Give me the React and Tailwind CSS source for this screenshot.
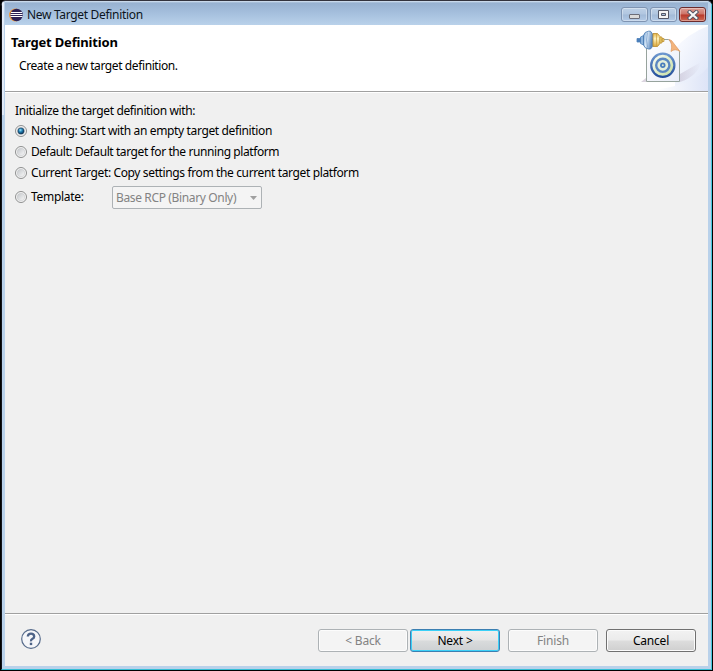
import { useState } from 'react';

const OPTIONS = [
  { id: 'nothing', label: 'Nothing: Start with an empty target definition', style: 'tracking-[-0.36px]' },
  { id: 'default', label: 'Default: Default target for the running platform', style: 'tracking-[-0.41px]' },
  { id: 'current', label: 'Current Target: Copy settings from the current target platform', style: 'tracking-[-0.37px]' },
];

function EclipseIcon() {
  return (
    <svg width="14" height="14" viewBox="0 0 14 14" className="shrink-0 mt-px">
      <circle cx="6.4" cy="7" r="6.4" fill="#f09a3e" />
      <circle cx="7.6" cy="7" r="6.2" fill="#2c2255" />
      <path d="M2 4.500h11M1.500 6.500h12M1.500 8.500h12" stroke="#fff" strokeWidth="1" />
    </svg>
  );
}

function WindowButton({ close, children }) {
  return (
    <button
      className={`w-[27px] h-[15px] rounded-[3px] border flex items-center justify-center shadow-[inset_0_0_0_1px_rgba(255,255,255,0.35)] ${
        close
          ? 'border-[#6b2b2d] bg-[linear-gradient(#dd9f97_0%,#cd7367_48%,#b8382a_52%,#cd6a55_100%)]'
          : 'border-[#7f94b2] bg-[linear-gradient(#bdd0e6_0%,#b1c6e0_48%,#a2bad8_52%,#b3cae6_100%)]'
      }`}
    >
      {children}
    </button>
  );
}

function TitleBar() {
  return (
    <div className="h-[24px] shrink-0 flex justify-between bg-[linear-gradient(#d9e6f4_0px,#98b2d1_2px,#a5bfdd_12px,#b9d1ea_24px)]">
      <div className="flex items-center pl-1 pt-[2px]">
        <EclipseIcon />
        <span className="ml-1 mt-[2px] leading-4 tracking-[-0.32px] text-[#0b1420]">New Target Definition</span>
      </div>
      <div className="flex gap-[2px] pt-[6px] pr-[2px]">
        <WindowButton>
          <svg width="11" height="5" viewBox="0 0 11 5" className="mt-[3px]">
            <rect x="0.5" y="0.5" width="10" height="4" rx="0.5" fill="#dadada" stroke="#6b6d78" />
          </svg>
        </WindowButton>
        <WindowButton>
          <svg width="11" height="9" viewBox="0 0 11 9">
            <path fillRule="evenodd" d="M.5.5h10v8H.5zM3.5 3.5h4v2h-4z" fill="#f4f4f4" stroke="#535666" />
          </svg>
        </WindowButton>
        <WindowButton close>
          <svg width="12" height="10" viewBox="0 0 12 10">
            <path d="M2.7 2l6.6 6M9.3 2L2.7 8" stroke="#535666" strokeWidth="4" strokeLinecap="square" />
            <path d="M2.7 2l6.6 6M9.3 2L2.7 8" stroke="#f7f7f7" strokeWidth="2.2" strokeLinecap="square" />
          </svg>
        </WindowButton>
      </div>
    </div>
  );
}

// Banner art: target page with a plug-in on its corner
function BannerImage() {
  return (
    <svg width="75" height="66" viewBox="0 0 75 66">
      <defs>
        <linearGradient id="swoosh" x1="0" y1="0" x2="1" y2="1">
          <stop offset="0.25" stopColor="#f6f8fe" />
          <stop offset="1" stopColor="#dce4f7" />
        </linearGradient>
        <linearGradient id="floor" x1="0" y1="0" x2="1" y2="0">
          <stop offset="0.2" stopColor="#fff" />
          <stop offset="1" stopColor="#dde4f7" />
        </linearGradient>
        <linearGradient id="shade" x1="0" y1="0" x2="1" y2="0">
          <stop offset="0" stopColor="#bdb5ca" />
          <stop offset="1" stopColor="#bdb5ca" stopOpacity="0" />
        </linearGradient>
        <linearGradient id="page" x1="0" y1="0" x2="1" y2="1">
          <stop offset="0" stopColor="#fff" />
          <stop offset="1" stopColor="#e9edf8" />
        </linearGradient>
        <linearGradient id="ring" x1="0" y1="0" x2="0" y2="1">
          <stop offset="0" stopColor="#6c96ce" />
          <stop offset="1" stopColor="#244f9b" />
        </linearGradient>
        <linearGradient id="disc" x1="0" y1="0" x2="1" y2="1">
          <stop offset="0" stopColor="#fff" />
          <stop offset="1" stopColor="#c2dc9a" />
        </linearGradient>
        <linearGradient id="blue" x1="0" y1="0" x2="1" y2="0.3">
          <stop offset="0" stopColor="#6f9fd1" />
          <stop offset="0.45" stopColor="#dceaf8" />
          <stop offset="1" stopColor="#5a88be" />
        </linearGradient>
        <linearGradient id="gold" x1="0" y1="0" x2="0" y2="1">
          <stop offset="0" stopColor="#e3b54b" />
          <stop offset="0.4" stopColor="#fff3bd" />
          <stop offset="1" stopColor="#d9a63a" />
        </linearGradient>
      </defs>
      <path d="M75 1Q54 9 42 24v42h33z" fill="url(#swoosh)" />
      <path d="M10 66Q60 62 75 42v24z" fill="url(#floor)" />
      <path d="M47 57V49L68 37Q65 51 47 57z" fill="url(#shade)" opacity="0.5" />
      <path d="M8 57l5-4v4z" fill="#b7aabf" opacity="0.5" />
      <path d="M13.5 14.500h22l11 12v30h-33z" fill="url(#page)" stroke="#8b9992" strokeWidth="0.900" />
      <path d="M36 14.500L38.500 15.500 47 26.500Q42 23 38 26.500 40 19 36 14.500z" fill="#f4b47c" stroke="#dc9a60" strokeWidth="0.700" />
      <circle cx="29.800" cy="40.300" r="11.600" fill="url(#disc)" stroke="url(#ring)" strokeWidth="2.200" />
      <circle cx="29.800" cy="40.300" r="6.600" fill="#e5efdc" stroke="#5b87c1" strokeWidth="2.400" />
      <circle cx="29.800" cy="40.300" r="2.700" fill="#497dbd" />
      <circle cx="29.800" cy="40.300" r="1" fill="#dfe9cc" />
      <path d="M4 13.500h4v3.500H4z" fill="#4a7fbb" stroke="#4c80ba" strokeWidth="0.800" />
      <path d="M7.500 12l3-1.500v9.500l-3-1.500z" fill="#8fb5dd" stroke="#4c80ba" strokeWidth="0.800" />
      <path d="M10.500 10.500Q11.500 6.500 15.500 6.200H17.500L19.500 9v12.500L17.500 24h-2Q11.500 23.500 10.500 20z" fill="url(#blue)" stroke="#4577b0" strokeWidth="0.800" />
      <path d="M14.500 7.500q-2 7.500 0 15" fill="none" stroke="#6e97c6" strokeWidth="0.700" />
      <path d="M20 8.500h4.500l2.500 3v7l-2.500 3H20z" fill="url(#gold)" stroke="#b98a2c" strokeWidth="0.800" />
      <path d="M23.500 9v12" stroke="#cf9f3c" strokeWidth="0.700" />
      <path d="M27 12h2v6h-2zM29 13.500h2v3h-2z" fill="#f3d776" stroke="#b98a2c" strokeWidth="0.700" />
    </svg>
  );
}

function Header() {
  return (
    <div className="h-[67px] shrink-0 bg-white border-b border-[#a0a0a0] flex justify-between">
      <div className="pl-[6px] pt-[9px]">
        <h1 className="text-[13px] font-bold leading-4 tracking-[-0.17px]">Target Definition</h1>
        <p className="ml-2 mt-2 leading-4 tracking-[-0.4px]">Create a new target definition.</p>
      </div>
      <BannerImage />
    </div>
  );
}

function Radio({ checked, onChange }) {
  return (
    <>
      <input type="radio" name="init" checked={checked} onChange={onChange} className="sr-only" />
      <svg width="12" height="12" viewBox="0 0 12 12" className="shrink-0 mr-1">
        <defs>
          <linearGradient id="radioFace" x1="0" y1="0" x2="1" y2="1">
            <stop offset="0" stopColor="#c2c5c9" />
            <stop offset="1" stopColor="#fafafa" />
          </linearGradient>
          <radialGradient id="radioDot" cx="0.4" cy="0.35" r="0.65">
            <stop offset="0" stopColor="#9be4fb" />
            <stop offset="0.45" stopColor="#2384b8" />
            <stop offset="1" stopColor="#0b2c4d" />
          </radialGradient>
        </defs>
        <circle cx="6" cy="6" r="5.5" fill="#f6f6f6" stroke="#8e8f8f" />
        <circle cx="6" cy="6" r="3.8" fill="url(#radioFace)" stroke="#c2c4c6" strokeWidth="0.5" />
        {checked && <circle cx="6" cy="6" r="3.1" fill="url(#radioDot)" stroke="#173e60" strokeWidth="0.6" />}
      </svg>
    </>
  );
}

function WizardButton({ variant, children }) {
  const styles = {
    disabled: 'border-[#adb2b5] bg-[#f4f4f4] text-[#838383] shadow-[inset_0_0_0_1px_#fcfcfc]',
    primary:
      'border-[#3c7fb1] bg-[linear-gradient(#f0f0f0_0%,#e6e6e6_48%,#d9dbdc_52%,#cdd0d2_100%)] shadow-[inset_0_0_0_1px_#3bd0f7]',
    normal:
      'border-[#707070] bg-[linear-gradient(#f2f2f2_0%,#ebebeb_48%,#dddddd_52%,#cfcfcf_100%)] shadow-[inset_0_0_0_1px_#fbfbfb]',
  };
  return (
    <button
      disabled={variant === 'disabled'}
      className={`w-[90px] h-[23px] rounded-[3px] border pt-px leading-4 tracking-[-0.2px] ${styles[variant]}`}
    >
      {children}
    </button>
  );
}

export default function App() {
  const [selected, setSelected] = useState('nothing');

  return (
    <div className="w-[713px] h-[671px] bg-black overflow-hidden font-['Noto_Sans','Open_Sans',sans-serif] text-[12px] text-black">
      <div className="h-full border border-t-[#33333d] border-black rounded-t-[6px] overflow-hidden bg-[#b9d1ea]">
        <div className="h-full flex flex-col border-l border-l-[#14141a] border-r border-r-[#45c8dd] border-b border-b-[#35bfd6]">
          <div className="flex-1 min-h-0 flex flex-col px-[3px] pb-[3px] bg-[linear-gradient(#e6eefa,#dfe9f7)] bg-[length:2px_114px] bg-no-repeat">
            <TitleBar />
            <Header />

            <main className="flex-1 bg-[#f0f0f0] border-t border-white pl-[10px] pt-[10px]">
              <p className="leading-4 tracking-[-0.37px]">Initialize the target definition with:</p>
              <div className="mt-1 flex flex-col gap-[5px]">
                {OPTIONS.map((o) => (
                  <label key={o.id} className="relative flex items-center h-4 whitespace-nowrap">
                    <Radio checked={selected === o.id} onChange={() => setSelected(o.id)} />
                    <span className={o.style}>{o.label}</span>
                  </label>
                ))}
              </div>
              <div className="mt-[5px] flex items-start">
                <label className="relative flex items-center w-[97px] mt-[3px]">
                  <Radio checked={selected === 'template'} onChange={() => setSelected('template')} />
                  <span className="leading-4 tracking-[-0.3px]">Template:</span>
                </label>
                <div className="w-[150px] h-[23px] flex items-center justify-between rounded-[2px] border border-[#adb2b5] bg-[#f4f4f4] pl-[3px] pr-1 text-[#838383]">
                  <span className="tracking-[-0.36px] whitespace-nowrap">Base RCP (Binary Only)</span>
                  <svg width="7" height="4" viewBox="0 0 7 4">
                    <path d="M0 0h7L3.500 4z" fill="#a0a0a0" />
                  </svg>
                </div>
              </div>
            </main>

            <footer className="h-[53px] shrink-0 bg-[#f0f0f0] border-t border-[#a0a0a0]">
              <div className="h-full border-t border-white flex items-start justify-between pl-4 pr-3">
                <svg width="20" height="20" viewBox="0 0 20 20" className="mt-[14px]">
                  <circle cx="10" cy="10" r="9.300" fill="#f5f6f9" stroke="#566b8b" strokeWidth="1.200" />
                  <path d="M6.800 7.500Q7 4.700 10 4.700T13.200 7.400Q13.200 8.900 11.500 9.800T10 12.300" fill="none" stroke="#4d6388" strokeWidth="2.300" />
                  <rect x="8.800" y="13.700" width="2.400" height="2.400" fill="#4d6388" />
                </svg>
                <div className="flex gap-2 mt-[14px]">
                  <div className="flex gap-[2px]">
                    <WizardButton variant="disabled">&lt; Back</WizardButton>
                    <WizardButton variant="primary">Next &gt;</WizardButton>
                  </div>
                  <WizardButton variant="disabled">Finish</WizardButton>
                  <WizardButton variant="normal">Cancel</WizardButton>
                </div>
              </div>
            </footer>
          </div>
        </div>
      </div>
    </div>
  );
}
